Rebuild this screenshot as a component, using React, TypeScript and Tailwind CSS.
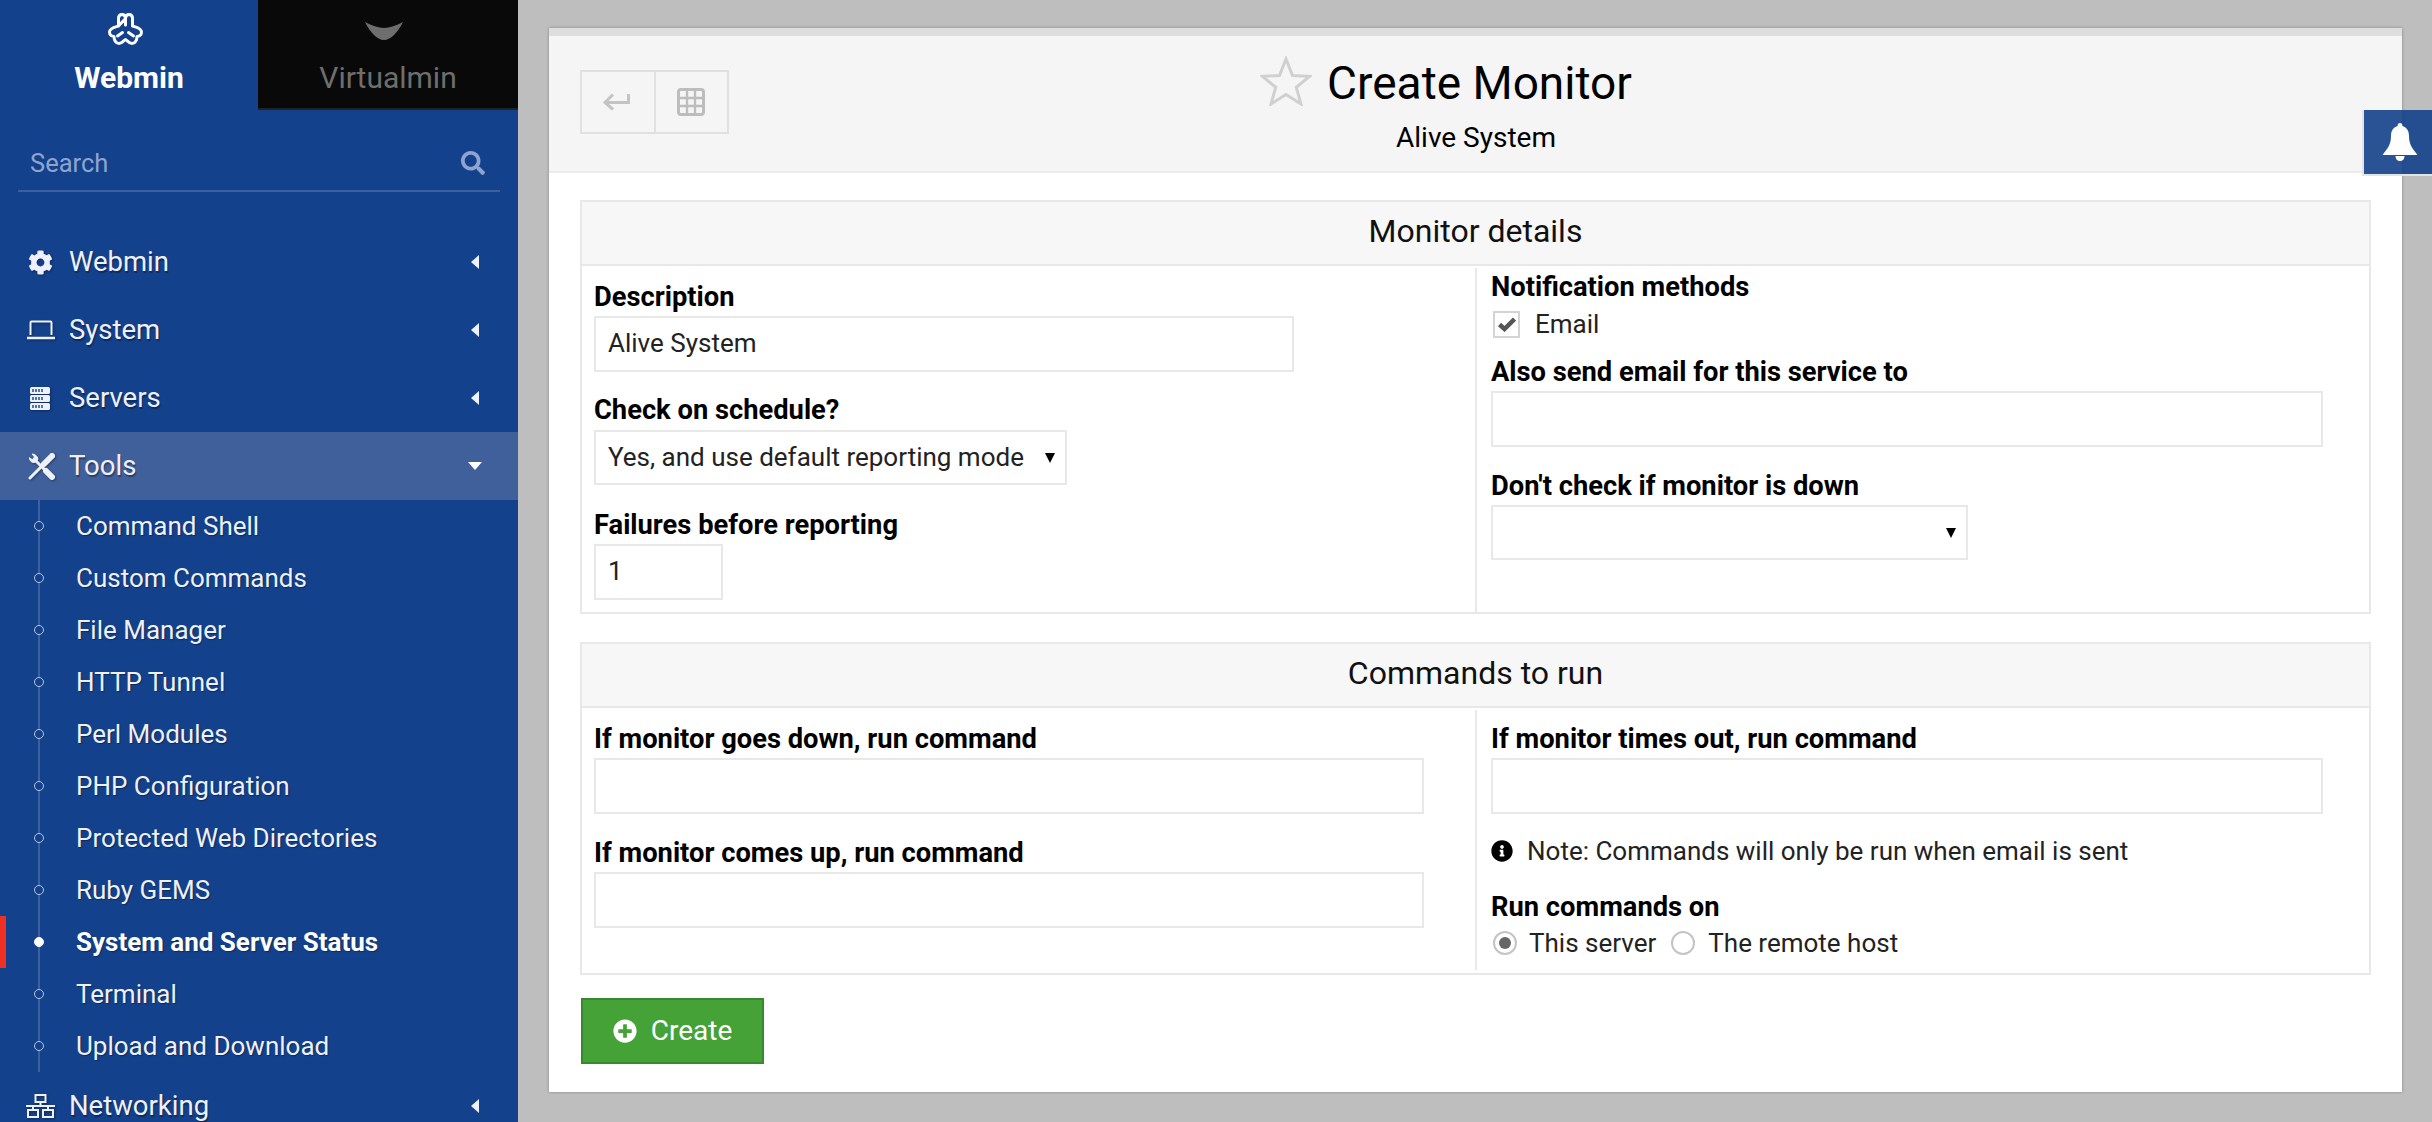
import { FaCog, FaInfoCircle, FaPlusCircle, FaSearch } from 'react-icons/fa'

const TOOLS = [
  'Command Shell',
  'Custom Commands',
  'File Manager',
  'HTTP Tunnel',
  'Perl Modules',
  'PHP Configuration',
  'Protected Web Directories',
  'Ruby GEMS',
  'System and Server Status',
  'Terminal',
  'Upload and Download',
]

function WebminLogo() {
  return (
    <svg width="35" height="32" viewBox="0 0 35 32" fill="none" stroke="white" strokeWidth="3" strokeLinejoin="round" strokeLinecap="round" className="mr-[8px]">
      <path d="M10.5 13V5.5C10.5 3 12 1.5 14 1.5S17.5 3 17.5 5.5V12M17.5 5.5C17.5 3 19 1.5 21 1.5S24.5 3 24.5 5.5V13C28 14 33.5 15 33.5 19C33.5 22 31 23.5 29 23.5C29 27 27 30.5 24 30.5C21 30.5 19.5 27.5 17.5 26.5C15.5 27.5 14 30.5 11 30.5C8 30.5 6 27 6 23.5C4 23.5 1.5 22 1.5 19C1.5 15 7 14 10.5 13Z" />
      <path d="M9.5 23L14.5 19.5M25.5 23L20.5 19.5" />
    </svg>
  )
}

function LaptopIcon() {
  return (
    <svg width="28" height="20" viewBox="0 0 28 20" fill="none" stroke="currentColor" strokeWidth="2">
      <path d="M3.5 15V2.5a1 1 0 0 1 1-1h19a1 1 0 0 1 1 1V15" />
      <path d="M0 18h28" strokeWidth="2.5" />
    </svg>
  )
}

function ServerIcon() {
  return (
    <svg width="20" height="23" viewBox="0 0 20 23" className="ml-[3px]">
      {[0, 8, 16].map((y) => (
        <g key={y}>
          <rect y={y} width="20" height="7" rx="1.5" fill="currentColor" />
          <path d={`M3 ${y + 2}v3M6 ${y + 2}v3M9 ${y + 2}v3M12 ${y + 2}v3`} stroke="#14418b" strokeWidth="1.4" />
        </g>
      ))}
    </svg>
  )
}

function ToolsIcon() {
  return (
    <svg width="27" height="27" viewBox="0 0 27 27" fill="none" stroke="currentColor" strokeLinecap="round" className="ml-[1px]">
      <path d="M2 25L15 12" strokeWidth="3" />
      <path d="M16 11L24 3" strokeWidth="6" />
      <path d="M7 7L17 17" strokeWidth="3" />
      <path d="M18 18L24 24" strokeWidth="6" />
      <path d="M1.500 5c0 3.500 3.500 6 7 3.500L10 6C9.500 3 7 1 4 1l2.500 3L4.500 6.500z" fill="currentColor" strokeWidth="1" />
    </svg>
  )
}

function NetworkIcon() {
  return (
    <svg width="29" height="24" viewBox="0 0 29 24" fill="none" stroke="currentColor" strokeWidth="2" className="ml-[-1px]">
      <rect x="9.5" y="1" width="10" height="7" />
      <rect x="2" y="16" width="10" height="7" />
      <rect x="17" y="16" width="10" height="7" />
      <path d="M14.5 8v4M0 12h29M7 12v4M22 12v4" />
    </svg>
  )
}

function MenuItem({ label, icon, open }: { label: string; icon: React.ReactNode; open?: boolean }) {
  return (
    <div
      className={`flex h-[68px] items-center pl-[27px] pr-[39px] text-[27.5px] text-[#eef0fb] [text-shadow:1px_2px_1px_rgba(0,0,0,0.35)] ${open ? 'bg-[#40609b]' : ''}`}
    >
      <span className="flex w-[42px] shrink-0 justify-start [filter:drop-shadow(1px_1px_1px_rgba(0,0,0,0.35))]">{icon}</span>
      <span>{label}</span>
      {open ? (
        <span className="ml-auto mr-[-3px] h-0 w-0 border-x-[7px] border-t-[8px] border-x-transparent border-t-white" />
      ) : (
        <span className="ml-auto h-0 w-0 border-y-[7px] border-r-[8px] border-y-transparent border-r-[#eef0fb]" />
      )}
    </div>
  )
}

function Sidebar() {
  return (
    <aside className="flex h-[1122px] w-[518px] shrink-0 flex-col overflow-hidden bg-[#14418b]">
      <div className="flex h-[110px] shrink-0">
        <div className="flex w-[258px] flex-col items-center pt-[13px] text-[30px] font-bold text-white">
          <WebminLogo />
          <span className="mt-[15px] leading-[36px]">Webmin</span>
        </div>
        <div className="flex flex-1 flex-col items-center border-b-2 border-[#222] bg-[#090909] pt-[22px] text-[30px] text-[#6e6e6e]">
          <svg width="38" height="18" viewBox="0 0 38 18" fill="#6e6e6e" className="mr-[8px]">
            <path d="M0 0C7 3.5 13 6 19 6S31 3.5 38 0C33 10 26 18 19 18S5 10 0 0z" />
          </svg>
          <span className="mt-[20px] leading-[36px]">Virtualmin</span>
        </div>
      </div>

      <div className="mx-[18px] mt-[30px] flex h-[52px] shrink-0 items-center justify-between border-b-2 border-[#3d60a0] pb-[3px] pl-[12px] pr-[15px] text-[25.5px] text-[#8ea4cf]">
        <span>Search</span>
        <FaSearch size={24} className="mb-[2px]" />
      </div>

      <nav className="mt-[36px] shrink-0">
        <MenuItem label="Webmin" icon={<FaCog size={25} className="ml-[1px]" />} />
        <MenuItem label="System" icon={<LaptopIcon />} />
        <MenuItem label="Servers" icon={<ServerIcon />} />
        <MenuItem label="Tools" icon={<ToolsIcon />} open />
        <ul className="ml-[38px] border-l-2 border-[#3d60a0]">
          {TOOLS.map((tool) => {
            const active = tool === 'System and Server Status'
            return (
              <li
                key={tool}
                className={`relative flex h-[52px] items-center pl-[36px] text-[26px] text-[#eef0fb] [text-shadow:1px_1px_1px_rgba(0,0,0,0.35)] ${active ? 'font-bold text-white' : ''}`}
              >
                <span
                  className={`absolute left-[-6px] h-[10px] w-[10px] rounded-full border-[1.5px] border-[#b9c6e0] ${active ? 'border-white bg-white' : 'bg-[#14418b]'}`}
                />
                {active && <span className="absolute left-[-40px] h-full w-[6px] bg-[#ee3124]" />}
                {tool}
              </li>
            )
          })}
        </ul>
        <MenuItem label="Networking" icon={<NetworkIcon />} />
      </nav>
    </aside>
  )
}

function Field({ label, children, className = '' }: { label: string; children: React.ReactNode; className?: string }) {
  return (
    <div className={className}>
      <div className="mb-[-3px] text-[27.3px] font-bold leading-[35px] text-black">{label}</div>
      {children}
    </div>
  )
}

function TextBox({ value = '', className }: { value?: string; className: string }) {
  return (
    <div className={`flex h-[56px] items-center border-2 border-[#e8e8e8] bg-white px-[12px] pb-[2px] text-[26px] text-[#222] ${className}`}>
      {value}
    </div>
  )
}

function SelectBox({ value = '', className }: { value?: string; className: string }) {
  return (
    <div className={`flex h-[55px] items-center justify-between border-2 border-[#e8e8e8] bg-white pl-[12px] pr-[10px] text-[26px] text-[#222] ${className}`}>
      <span>{value}</span>
      <span className="h-0 w-0 border-x-[5.5px] border-t-[10px] border-x-transparent border-t-black" />
    </div>
  )
}

function Section({ title, children }: { title: string; children: React.ReactNode }) {
  return (
    <section className="border-2 border-[#e8e8e8]">
      <div className="flex h-[64px] items-center justify-center border-b-2 border-[#e8e8e8] bg-[#f7f7f7] pb-[5px] text-[32px] text-[#111]">
        {title}
      </div>
      {children}
    </section>
  )
}

function Content() {
  return (
    <main className="relative flex-1 bg-[#bebebe] pl-[31px] pr-[30px] pt-[28px]">
      <div className="h-[1064px] border-t-[8px] border-[#dedede] bg-white shadow-[0_0_3px_rgba(0,0,0,0.3)]">
        <header className="flex h-[137px] border-b-2 border-[#ececec] bg-[#f5f5f5] pl-[31px] pr-[30px]">
          <div className="mt-[34px] flex h-[64px] w-[149px] border-2 border-[#e0e0e0] text-[#c4c4c4]">
            <span className="flex flex-1 items-center justify-center border-r-2 border-[#e0e0e0]">
              <svg width="28" height="18" viewBox="0 0 28 18" fill="none" stroke="currentColor" strokeWidth="3" className="mr-[4px]">
                <path d="M26.5 1v8.5H3M11 1.5L3 9.5l8 7" />
              </svg>
            </span>
            <span className="flex flex-1 items-center justify-center">
              <svg width="28" height="28" viewBox="0 0 28 28" fill="none" stroke="#bdbdbd" strokeWidth="3">
                <rect x="1.5" y="1.5" width="25" height="25" rx="2.5" />
                <path d="M1 10h26M1 18h26M10 1v26M18 1v26" strokeWidth="2.4" />
              </svg>
            </span>
          </div>
          <div className="ml-[-149px] flex flex-1 flex-col items-center">
            <div className="mr-[60px] mt-[15px] flex items-center gap-[15px] text-[46px] leading-[64px] text-black">
              <svg width="52" height="50" viewBox="0 0 52 50" fill="none" stroke="#d0d0d0" strokeWidth="3" className="mt-[-4px]">
                <path d="M26 3l6.5 16.5 17 .8-13.200 11 4.700 16.700-15-9.500-15 9.500 4.700-16.700-13.200-11 17-.8z" />
              </svg>
              <span>Create Monitor</span>
            </div>
            <div className="mt-[5px] text-[28px] leading-[36px] text-black">Alive System</div>
          </div>
        </header>

        <div className="px-[31px] pt-[27px]">
          <Section title="Monitor details">
            <div className="grid h-[346px] grid-cols-[895px_1fr]">
              <div className="mt-[2px] border-r-2 border-[#e8e8e8] px-[12px] pt-[12px]">
                <Field label="Description">
                  <TextBox value="Alive System" className="mt-[4px] w-[700px]" />
                </Field>
                <Field label="Check on schedule?" className="mt-[21px]">
                  <SelectBox value="Yes, and use default reporting mode" className="mt-[5px] w-[473px]" />
                </Field>
                <Field label="Failures before reporting" className="mt-[23px]">
                  <TextBox value="1" className="mt-[4px] w-[129px]" />
                </Field>
              </div>
              <div className="mt-[2px] px-[14px] pt-[2px]">
                <Field label="Notification methods">
                  <label className="mt-[5px] flex h-[34px] items-center gap-[15px] text-[26px] text-[#222]">
                    <span className="ml-[2px] flex h-[27px] w-[27px] items-center justify-center border-2 border-[#d4d4d4] bg-white">
                      <svg width="18" height="15" viewBox="0 0 18 15" fill="none" stroke="#555" strokeWidth="4.5">
                        <path d="M1.500 7.500l5 4.500L16.500 2" />
                      </svg>
                    </span>
                    Email
                  </label>
                </Field>
                <Field label="Also send email for this service to" className="mt-[14px]">
                  <TextBox className="mt-[4px] w-[832px]" />
                </Field>
                <Field label="Don't check if monitor is down" className="mt-[22px]">
                  <SelectBox className="mt-[4px] w-[477px]" />
                </Field>
              </div>
            </div>
          </Section>

          <div className="mt-[28px]">
            <Section title="Commands to run">
              <div className="grid h-[265px] grid-cols-[895px_1fr]">
                <div className="mb-[3px] mt-[2px] border-r-2 border-[#e8e8e8] px-[12px] pt-[12px]">
                  <Field label="If monitor goes down, run command">
                    <TextBox className="mt-[4px] w-[830px]" />
                  </Field>
                  <Field label="If monitor comes up, run command" className="mt-[22px]">
                    <TextBox className="mt-[4px] w-[830px]" />
                  </Field>
                </div>
                <div className="mt-[2px] px-[14px] pt-[12px]">
                  <Field label="If monitor times out, run command">
                    <TextBox className="mt-[4px] w-[832px]" />
                  </Field>
                  <div className="mt-[20px] flex h-[34px] items-center gap-[14px] text-[26px] text-[#222]">
                    <FaInfoCircle size={22} className="text-black" />
                    Note: Commands will only be run when email is sent
                  </div>
                  <Field label="Run commands on" className="mt-[22px]">
                    <div className="mt-[3px] flex h-[36px] items-center text-[26px] text-[#222]">
                      <span className="ml-[2px] flex h-[24px] w-[24px] items-center justify-center rounded-full border-2 border-[#c4c4c4] bg-white">
                        <span className="h-[12px] w-[12px] rounded-full bg-[#666]" />
                      </span>
                      <span className="ml-[12px]">This server</span>
                      <span className="ml-[15px] h-[24px] w-[24px] rounded-full border-2 border-[#c4c4c4] bg-white" />
                      <span className="ml-[13px]">The remote host</span>
                    </div>
                  </Field>
                </div>
              </div>
            </Section>
          </div>

          <button
            type="button"
            className="ml-[1px] mt-[23px] flex h-[66px] w-[183px] items-center justify-center gap-[14px] border-2 border-[#38882e] bg-[#44a236] text-[28px] text-white"
          >
            <FaPlusCircle size={24} />
            Create
          </button>
        </div>
      </div>

      <div className="absolute right-0 top-[110px] flex h-[66px] w-[70px] items-center justify-center border-b-2 border-l-2 border-[#e4e4e4] bg-[#14418b]/90 pl-[3px]">
        <svg width="36" height="38" viewBox="0 0 35 38" fill="white">
          <path d="M17.5 0c1.500 0 2.500 1 2.500 3 4.500 1.500 6.500 5 6.500 10 0 9 4 13 8.500 19H0c4.500-6 8.500-10 8.500-19 0-5 2-8.500 6.500-10 0-2 1-3 2.500-3z" />
          <path d="M13 33h9c0 3-2 5-4.500 5S13 36 13 33z" />
        </svg>
      </div>
    </main>
  )
}

export default function App() {
  return (
    <div className="flex h-[1122px] w-[2432px] overflow-hidden font-['Roboto',sans-serif]">
      <Sidebar />
      <Content />
    </div>
  )
}
